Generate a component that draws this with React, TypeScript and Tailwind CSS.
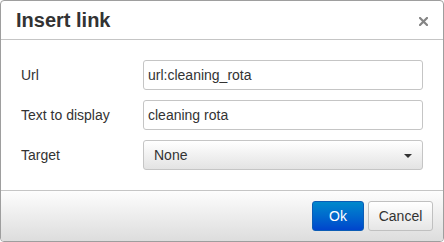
import React from "react";

export default function App() {
  return (
    <div className="w-[444px] h-[242px] bg-white" style={{ fontFamily: '"Liberation Sans", Arial, sans-serif' }}>
      <div className="w-[444px] h-[242px] border border-[#9e9e9e] rounded-[4px] flex flex-col overflow-hidden bg-white">
        <div className="h-[39px] shrink-0 border-b border-[#c5c5c5] flex items-center justify-between pl-[15px] pr-[15px]">
          <span className="text-[20px] font-bold text-[#333] leading-none">Insert link</span>
          <svg width="9" height="9" viewBox="0 0 9 9" className="mt-[2px]">
            <path d="M1 1L8 8M8 1L1 8" stroke="#858585" strokeWidth="2.2" strokeLinecap="square" />
          </svg>
        </div>
        <div className="flex-1 px-[20px] py-[20px] flex flex-col gap-[10px] text-[14px] text-[#333]">
          <div className="flex items-center h-[30px]">
            <div className="w-[122px]">Url</div>
            <div className="w-[280px] h-[30px] border border-[#c5c5c5] rounded-[3px] flex items-center pl-[4px] pt-[1px]">url:cleaning_rota</div>
          </div>
          <div className="flex items-center h-[30px]">
            <div className="w-[122px]">Text to display</div>
            <div className="w-[280px] h-[30px] border border-[#c5c5c5] rounded-[3px] flex items-center pl-[4px] pt-[1px]">cleaning rota</div>
          </div>
          <div className="flex items-center h-[30px]">
            <div className="w-[122px]">Target</div>
            <div className="w-[280px] h-[30px] border border-[#c5c5c5] rounded-[3px] flex items-center justify-between pl-[10px] pr-[10px] pt-[1px] bg-gradient-to-b from-white to-[#e3e3e3]">
              <span>None</span>
              <svg width="8" height="4" viewBox="0 0 8 4">
                <path d="M0 0H8L4 4Z" fill="#333" />
              </svg>
            </div>
          </div>
        </div>
        <div className="h-[51px] shrink-0 border-t border-[#c5c5c5] bg-gradient-to-b from-[#fdfdfd] to-[#dddddd] flex justify-end items-start pt-[10px] pr-[10px] gap-[4px] text-[14px]">
          <div className="w-[52px] h-[30px] rounded-[3px] border border-[#0b5cb5] bg-gradient-to-b from-[#0088cc] to-[#0044cc] text-white flex items-center justify-center">Ok</div>
          <div className="w-[65px] h-[30px] rounded-[3px] border border-[#c0c0c0] bg-gradient-to-b from-white to-[#e6e6e6] text-[#333] flex items-center justify-center">Cancel</div>
        </div>
      </div>
    </div>
  );
}
